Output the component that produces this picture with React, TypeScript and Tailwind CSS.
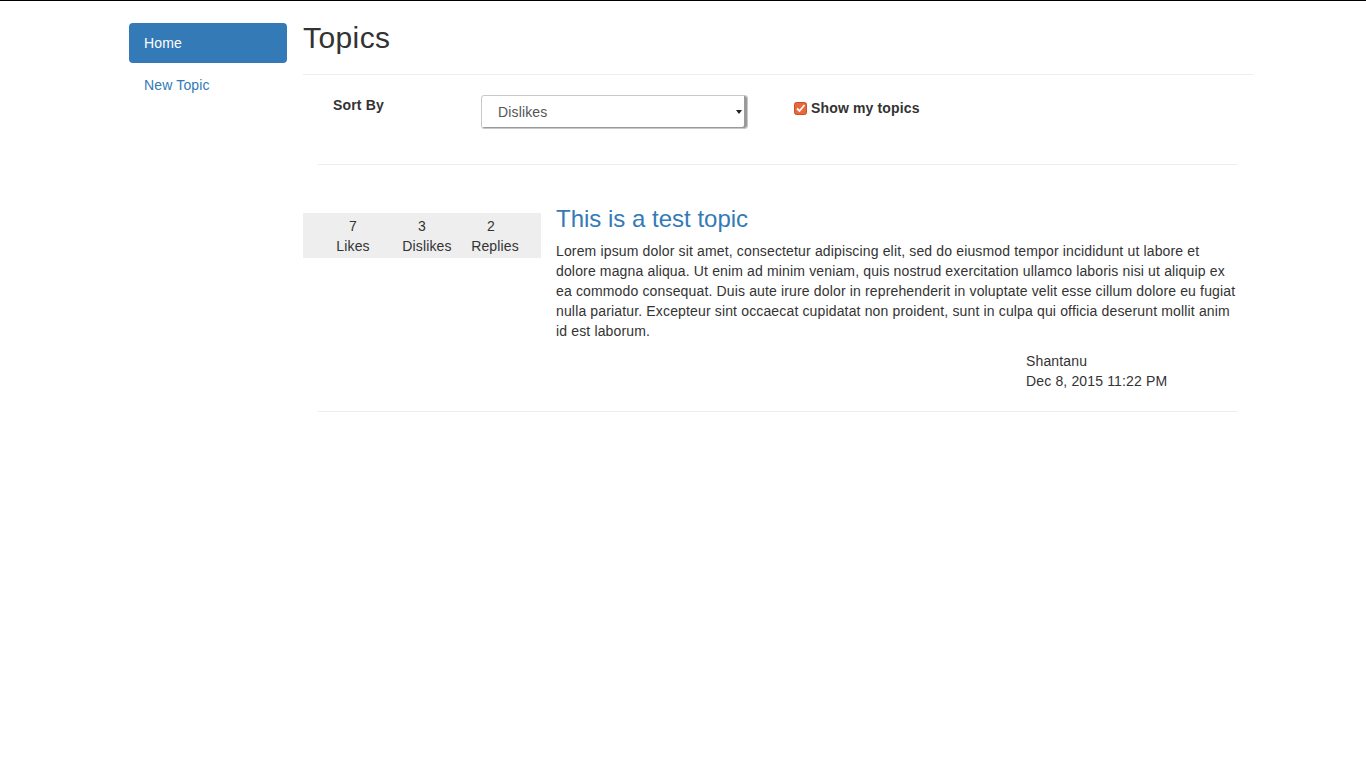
import React from 'react'

const font = { fontFamily: '"Liberation Sans", Arial, sans-serif' }

function Stat({ value, label, className, numShift }: { value: number; label: string; className: string; numShift: string }) {
  return (
    <div className={`text-center ${className}`}>
      <div className={numShift}>{value}</div>
      <div>{label}</div>
    </div>
  )
}

export default function App() {
  return (
    <div className="min-h-[768px] border-t border-black bg-white text-[14px] leading-[20px] tracking-[0.15px] text-[#333]" style={font}>
      <div className="ml-[129px] flex w-[1124px] pt-[22px]">
        <nav className="w-[158px] shrink-0">
          <a className="block h-[40px] rounded-[4px] bg-[#337ab7] px-[15px] py-[10px] text-white">Home</a>
          <a className="mt-[2px] block px-[15px] py-[10px] text-[#337ab7]">New Topic</a>
        </nav>

        <main className="ml-[16px] w-[950px]">
          <h1 className="h-[33px] text-[30px] leading-[30px] tracking-[0.4px]">Topics</h1>
          <div className="mt-[18px] border-t border-[#eee]" />

          <div className="mx-[15px]">
            <div className="flex items-start px-[15px] pt-[20px]">
              <div className="w-[148px] font-bold">Sort By</div>
              <div className="relative flex h-[34px] w-[267px] items-center rounded-[3px] border border-[#c8c8c8] bg-white pl-[16px] text-[#555] shadow-[inset_-3px_-1px_0_#9a9a9a]">
                Dislikes
                <span className="absolute right-[5px] top-[14px] h-0 w-0 border-x-[3px] border-t-[4px] border-x-transparent border-t-[#222]" />
              </div>
              <label className="ml-[46px] flex items-center pt-[3px] font-bold">
                <svg width="13" height="13" viewBox="0 0 13 13" className="mr-[4px]">
                  <rect x="0.5" y="0.5" width="12" height="12" rx="2" fill="#e9673b" stroke="#c5502a" />
                  <path d="M3 6.5 L5.5 9 L10.5 3" fill="none" stroke="#fff" strokeWidth="1.8" />
                </svg>
                Show my topics
              </label>
            </div>
            <div className="mt-[35px] border-t border-[#eee]" />
          </div>

          <div className="mt-[41px] flex">
            <div className="w-[238px] shrink-0 pt-[7px]">
              <div className="flex h-[45px] bg-[#eee] pt-[3px]">
                <Stat value={7} label="Likes" className="ml-[15px] w-[70px]" numShift="" />
                <Stat value={3} label="Dislikes" className="ml-[2px] w-[74px]" numShift="pr-[10px]" />
                <Stat value={2} label="Replies" className="w-[62px]" numShift="pr-[8px]" />
              </div>
            </div>
            <div className="w-[712px] px-[15px]">
              <h3 className="text-[24px] leading-[26px] tracking-normal text-[#337ab7]">This is a test topic</h3>
              <p className="mb-[10px] mt-[9px]">
                Lorem ipsum dolor sit amet, consectetur adipiscing elit, sed do eiusmod tempor incididunt ut labore et dolore magna aliqua. Ut enim ad minim veniam, quis nostrud exercitation ullamco laboris nisi ut aliquip ex ea commodo consequat. Duis aute irure dolor in reprehenderit in voluptate velit esse cillum dolore eu fugiat nulla pariatur. Excepteur sint occaecat cupidatat non proident, sunt in culpa qui officia deserunt mollit anim id est laborum.
              </p>
              <div className="ml-[470px]">
                <div>Shantanu</div>
                <div>Dec 8, 2015 11:22 PM</div>
              </div>
            </div>
          </div>
          <div className="mx-[15px] mt-[20px] border-t border-[#eee]" />
        </main>
      </div>
    </div>
  )
}
